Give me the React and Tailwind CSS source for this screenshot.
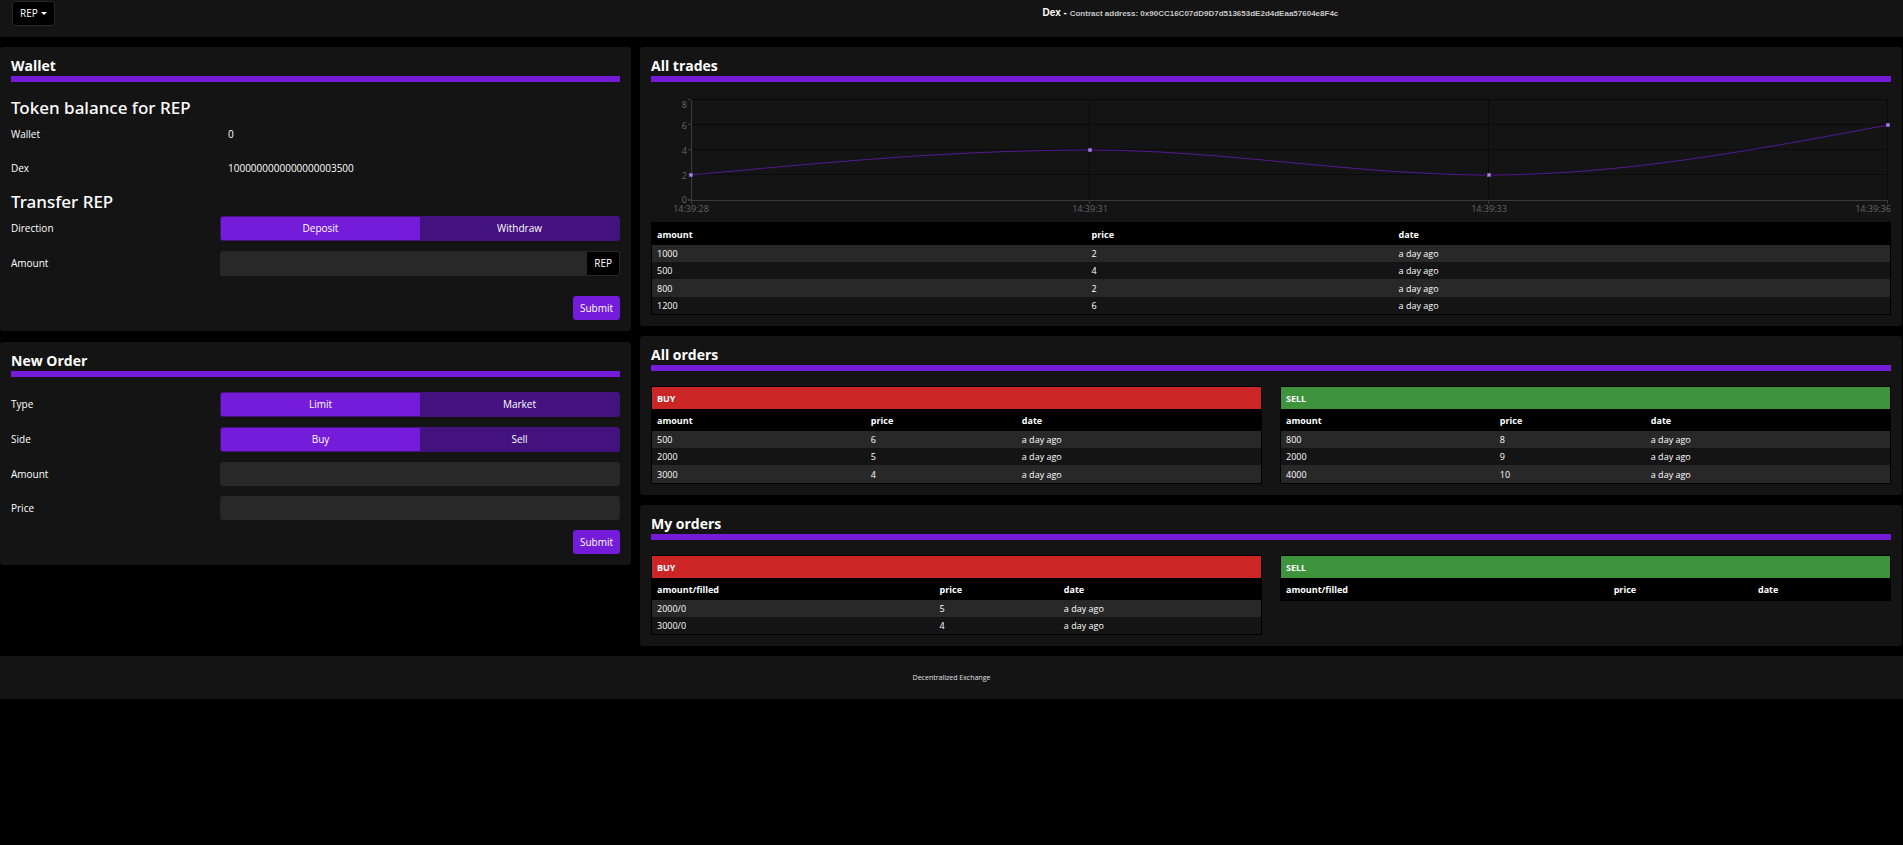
import React, { useState } from "react";

const TRADES = [
  { amount: "1000", price: "2", date: "a day ago" },
  { amount: "500", price: "4", date: "a day ago" },
  { amount: "800", price: "2", date: "a day ago" },
  { amount: "1200", price: "6", date: "a day ago" },
];

const BUY_ORDERS = [
  { amount: "500", price: "6", date: "a day ago" },
  { amount: "2000", price: "5", date: "a day ago" },
  { amount: "3000", price: "4", date: "a day ago" },
];

const SELL_ORDERS = [
  { amount: "800", price: "8", date: "a day ago" },
  { amount: "2000", price: "9", date: "a day ago" },
  { amount: "4000", price: "10", date: "a day ago" },
];

const MY_BUY_ORDERS = [
  { amount: "2000/0", price: "5", date: "a day ago" },
  { amount: "3000/0", price: "4", date: "a day ago" },
];

function Card({ title, children }) {
  return (
    <section className="rounded-[3px] bg-[#141414] px-[11px] pb-[11px]">
      <h2 className="mb-[15px] flex h-[35px] items-end border-b-[6px] border-[#741cd9] text-[14px] leading-[20px] font-bold">
        {title}
      </h2>
      {children}
    </section>
  );
}

function SubHeading({ children }) {
  return <h3 className="mb-[3px] font-['Noto_Sans',sans-serif] text-[17px] leading-[22px] font-medium">{children}</h3>;
}

function Field({ label, htmlFor, id, children }) {
  return (
    <div className="grid grid-cols-[1fr_2fr] items-center gap-x-[9px]">
      {htmlFor ? <label htmlFor={htmlFor}>{label}</label> : <span id={id}>{label}</span>}
      {children}
    </div>
  );
}

function Toggle({ labelledBy, options }) {
  const [active, setActive] = useState(options[0]);
  return (
    <div
      role="group"
      aria-labelledby={labelledBy}
      className="grid h-[25px] grid-cols-2 overflow-hidden rounded-[3px] border border-[#44127f] bg-[#44127f]"
    >
      {options.map((option) => (
        <button
          key={option}
          type="button"
          aria-pressed={active === option}
          onClick={() => setActive(option)}
          className={active === option ? "bg-[#741cd9]" : "bg-[#44127f]"}
        >
          {option}
        </button>
      ))}
    </div>
  );
}

function SubmitButton() {
  return (
    <button type="submit" className="h-[24px] self-end rounded-[3px] bg-[#741cd9] px-[7px]">
      Submit
    </button>
  );
}

function TextInput({ id }) {
  return <input id={id} type="text" className="h-[24px] w-full rounded-[3px] bg-[#282828] px-2 outline-none" />;
}

function Wallet() {
  return (
    <Card title="Wallet">
      <SubHeading>Token balance for REP</SubHeading>
      <div className="mb-[11px] flex flex-col gap-[10px]">
        <Field label="Wallet" htmlFor="balance-wallet">
          <input id="balance-wallet" readOnly value="0" className="h-[24px] w-full bg-transparent px-2 outline-none" />
        </Field>
        <Field label="Dex" htmlFor="balance-dex">
          <input
            id="balance-dex"
            readOnly
            value="1000000000000000003500"
            className="h-[24px] w-full bg-transparent px-2 outline-none"
          />
        </Field>
      </div>
      <SubHeading>Transfer REP</SubHeading>
      <form className="flex flex-col gap-[10px]" onSubmit={(e) => e.preventDefault()}>
        <Field label="Direction" id="direction-label">
          <Toggle labelledBy="direction-label" options={["Deposit", "Withdraw"]} />
        </Field>
        <div className="mb-[10px]">
          <Field label="Amount" htmlFor="transfer-amount">
            <div className="flex h-[25px] overflow-hidden rounded-[3px] bg-[#282828]">
              <input id="transfer-amount" type="text" className="min-w-0 flex-1 bg-transparent px-2 outline-none" />
              <span className="flex items-center rounded-r-[3px] border border-[#282828] bg-black px-[7px]">REP</span>
            </div>
          </Field>
        </div>
        <SubmitButton />
      </form>
    </Card>
  );
}

function NewOrder() {
  return (
    <Card title="New Order">
      <form className="flex flex-col gap-[10px]" onSubmit={(e) => e.preventDefault()}>
        <Field label="Type" id="type-label">
          <Toggle labelledBy="type-label" options={["Limit", "Market"]} />
        </Field>
        <Field label="Side" id="side-label">
          <Toggle labelledBy="side-label" options={["Buy", "Sell"]} />
        </Field>
        <Field label="Amount" htmlFor="order-amount">
          <TextInput id="order-amount" />
        </Field>
        <Field label="Price" htmlFor="order-price">
          <TextInput id="order-price" />
        </Field>
        <SubmitButton />
      </form>
    </Card>
  );
}

const Y_TICKS = [
  { label: "8", y: 3, textY: 11 },
  { label: "6", y: 28, textY: 32 },
  { label: "4", y: 53, textY: 57 },
  { label: "2", y: 78, textY: 82 },
  { label: "0", y: 103, textY: 106 },
];

const POINTS = [
  { label: "14:39:28", x: 40, y: 78, textX: 40 },
  { label: "14:39:31", x: 439, y: 53, textX: 439 },
  { label: "14:39:33", x: 838, y: 78, textX: 838 },
  { label: "14:39:36", x: 1237, y: 28, textX: 1222 },
];

function TradeChart() {
  return (
    <svg viewBox="0 0 1240 125" className="block w-full" role="img" aria-label="Trade prices over time">
      <g stroke="#0a0a0a" shapeRendering="crispEdges">
        {Y_TICKS.slice(0, 4).map((t) => (
          <line key={t.label} x1="40" x2="1237" y1={t.y - 0.5} y2={t.y - 0.5} />
        ))}
        {POINTS.slice(1).map((p) => (
          <line key={p.label} x1={p.x - 0.5} x2={p.x - 0.5} y1="3" y2="103" />
        ))}
      </g>
      <g stroke="#3a3a3a" shapeRendering="crispEdges">
        <line x1="40.5" x2="40.5" y1="3" y2="107" />
        <line x1="37" x2="1237" y1="103.5" y2="103.5" />
        {Y_TICKS.map((t) => (
          <line key={t.label} x1="37" x2="40" y1={t.y - 0.5} y2={t.y - 0.5} />
        ))}
        {POINTS.slice(1).map((p) => (
          <line key={p.label} x1={p.x - 0.5} x2={p.x - 0.5} y1="103" y2="107" />
        ))}
      </g>
      <g fill="#666666" fontSize="9">
        {Y_TICKS.map((t) => (
          <text key={t.label} x="36" y={t.textY} textAnchor="end">
            {t.label}
          </text>
        ))}
        {POINTS.map((p) => (
          <text key={p.label} x={p.textX} y="115" textAnchor="middle">
            {p.label}
          </text>
        ))}
      </g>
      <path
        d="M40 78C173 65.5 306 53 439 53C572 53 705 78 838 78C971 78 1104 53 1237 28"
        fill="none"
        stroke="#741cd9"
        strokeOpacity="0.65"
      />
      {POINTS.map((p) => (
        <g key={p.label} shapeRendering="crispEdges">
          <rect x={p.x - 2} y={p.y - 2} width="4" height="4" fill="#7d52bd" />
          <rect x={p.x - 1} y={p.y - 1} width="2" height="2" fill="#a796c2" />
        </g>
      ))}
    </svg>
  );
}

function OrdersTable({ caption, captionColor, amountLabel = "amount", widths, rows }) {
  return (
    <table className="w-full table-fixed border-separate border-spacing-0 border border-black text-left text-[9px] leading-[13px]">
      <colgroup>
        {widths.map((w, i) => (
          <col key={i} className={w} />
        ))}
        <col />
      </colgroup>
      <thead>
        {caption && (
          <tr className={captionColor}>
            <th colSpan={3} className="h-[22px] px-[5px] py-0">
              {caption}
            </th>
          </tr>
        )}
        <tr className="bg-black">
          <th className="h-[22px] px-[5px] py-0">{amountLabel}</th>
          <th className="h-[22px] px-[5px] py-0">price</th>
          <th className="h-[22px] px-[5px] py-0">date</th>
        </tr>
      </thead>
      <tbody>
        {rows.map((row) => (
          <tr key={row.amount} className="h-[17px] odd:bg-[#282828] nth-3:h-[18px]">
            <td className="px-[5px] py-0">{row.amount}</td>
            <td className="px-[5px] py-0">{row.price}</td>
            <td className="px-[5px] py-0">{row.date}</td>
          </tr>
        ))}
      </tbody>
    </table>
  );
}

export default function App() {
  return (
    <div className="min-h-screen bg-black font-['Open_Sans','Noto_Sans',sans-serif] text-[10px] leading-[15px] text-white">
      <header className="flex h-[37px] items-start bg-[#141414]">
        <div className="w-1/4 pt-px pl-3">
          <button
            type="button"
            aria-haspopup="menu"
            className="flex h-[25px] items-center gap-[3px] rounded-[3px] border border-[#282828] bg-black px-[7px]"
          >
            REP
            <svg viewBox="0 0 6 3" className="mb-px h-[3px] w-[6px]" aria-hidden="true">
              <path d="M0 0H6L3 3Z" fill="currentColor" />
            </svg>
          </button>
        </div>
        <h1 className="flex-1 pt-[5px] pl-[2px] text-center font-['Liberation_Sans',Arial,sans-serif] text-[10px] font-bold">
          Dex - <span className="text-[8px] text-[#c8c8c8]">Contract address: 0x90CC16C07dD9D7d513653dE2d4dEaa57604e8F4c</span>
        </h1>
      </header>

      <main className="grid grid-cols-[1fr_2fr] items-start gap-[9px] py-[10px] pr-px">
        <div className="flex min-w-0 flex-col gap-[11px]">
          <Wallet />
          <NewOrder />
        </div>
        <div className="flex min-w-0 flex-col gap-[10px]">
          <Card title="All trades">
            <TradeChart />
            <OrdersTable widths={["w-[35.1%]", "w-[24.8%]"]} rows={TRADES} />
          </Card>
          <Card title="All orders">
            <div className="grid grid-cols-2 items-start gap-[18px]">
              <OrdersTable caption="BUY" captionColor="bg-[#cb2525]" widths={["w-[35.1%]", "w-[24.8%]"]} rows={BUY_ORDERS} />
              <OrdersTable caption="SELL" captionColor="bg-[#3d943d]" widths={["w-[35.1%]", "w-[24.8%]"]} rows={SELL_ORDERS} />
            </div>
          </Card>
          <Card title="My orders">
            <div className="grid grid-cols-2 items-start gap-[18px]">
              <OrdersTable
                caption="BUY"
                captionColor="bg-[#cb2525]"
                amountLabel="amount/filled"
                widths={["w-[46.4%]", "w-[20.4%]"]}
                rows={MY_BUY_ORDERS}
              />
              <OrdersTable
                caption="SELL"
                captionColor="bg-[#3d943d]"
                amountLabel="amount/filled"
                widths={["w-[53.8%]", "w-[23.7%]"]}
                rows={[]}
              />
            </div>
          </Card>
        </div>
      </main>

      <footer className="flex h-[43px] items-center justify-center bg-[#141414] text-[7px] text-[#e0e0e0]">
        Decentralized Exchange
      </footer>
    </div>
  );
}
